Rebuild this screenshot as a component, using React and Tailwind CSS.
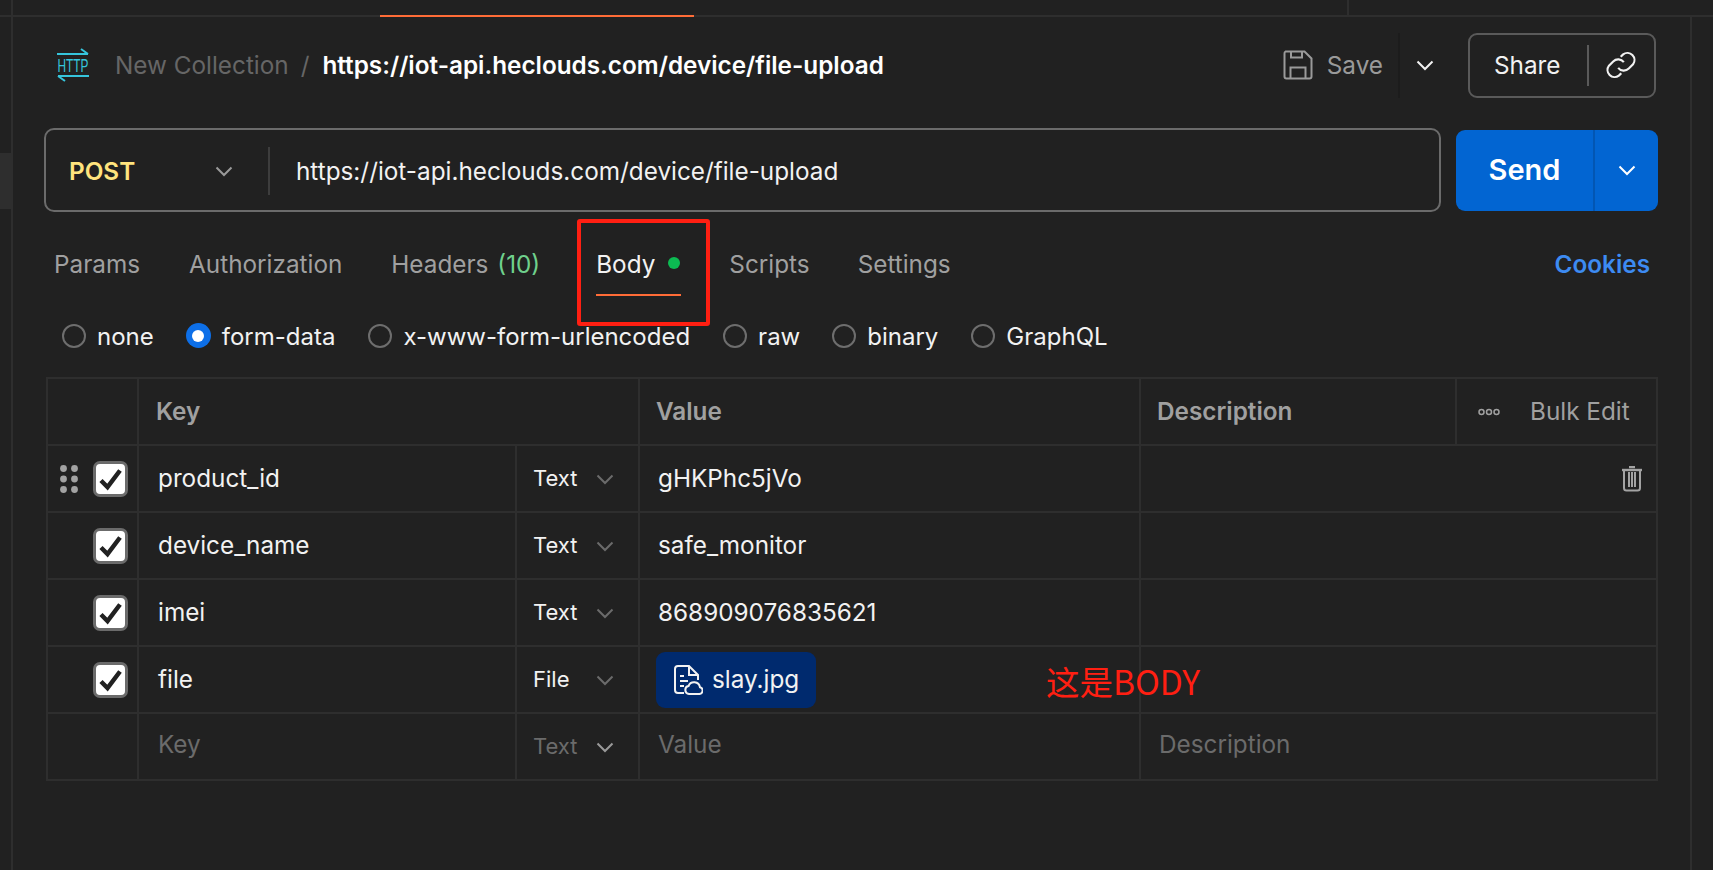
import React from "react";

const Chevron = ({ className = "", size = 20, color = "currentColor", sw = 2 }) => (
  <svg width={size} height={size} viewBox="0 0 20 20" fill="none" stroke={color} strokeWidth={sw} className={className}>
    <path d="M2.5 6.5 10 14l7.500-7.500" />
  </svg>
);

const Radio = ({ label, on, ml }) => (
  <div className={`flex items-center gap-[11px] ${ml}`}>
    {on ? (
      <span className="-mt-[3px] w-[25px] h-[25px] rounded-full bg-[#0d6fe8] flex items-center justify-center">
        <span className="w-[12px] h-[12px] rounded-full bg-white" />
      </span>
    ) : (
      <span className="-mt-[3px] w-[24px] h-[24px] rounded-full border-2 border-[#6e6e6e]" />
    )}
    <span className="text-[#f2f2f2]">{label}</span>
  </div>
);

const Check = () => (
  <span className="w-[35px] h-[36px] rounded-[7px] bg-white border-[3px] border-[#6b6b6b] flex items-center justify-center">
    <svg width="24" height="24" viewBox="0 0 24 24" fill="none" stroke="#212121" strokeWidth="4.500">
      <path d="M2 13.500 8.500 20 21 3.500" />
    </svg>
  </span>
);

const Grip = () => (
  <svg width="18" height="28" viewBox="0 0 18 28" fill="#a3a3a3">
    {[3.5, 14, 24.5].map((y) => (
      <g key={y}>
        <circle cx="3.500" cy={y} r="3.400" />
        <circle cx="14.500" cy={y} r="3.400" />
      </g>
    ))}
  </svg>
);

const Row = ({ k, type, value, grip, check = true, placeholder, trash, last }) => (
  <div className={`grid grid-cols-[91px_378px_123px_501px_1fr] ${last ? "h-[65px]" : "h-[67px] border-b-2 border-[#2e2e2e]"}`}>
    <div className="border-r-2 border-[#2e2e2e] flex items-center justify-end pr-[9px] gap-[15px]">
      {grip && <Grip />}
      {check && <Check />}
    </div>
    <div className={`border-r-2 border-[#2e2e2e] flex items-center pl-[19px] ${placeholder ? "text-[#6b6b6b] pb-[4px]" : "text-[#f2f2f2]"}`}>
      {k}
    </div>
    <div className={`border-r-2 border-[#2e2e2e] flex items-center pl-[16px] text-[22px] ${placeholder ? "text-[#6b6b6b]" : "text-[#f2f2f2]"}`}>
      <span className="w-[62px]">{type}</span>
      <Chevron size={20} color={placeholder ? "#9a9a9a" : "#6b6b6b"} />
    </div>
    <div className={`border-r-2 border-[#2e2e2e] flex items-center pl-[18px] ${placeholder ? "text-[#6b6b6b] pb-[4px]" : "text-[#f2f2f2]"}`}>
      {value}
    </div>
    <div className={`flex items-center justify-between pl-[18px] pr-[13px] text-[#6b6b6b] ${placeholder ? "pb-[4px]" : ""}`}>
      <span>{placeholder ? "Description" : ""}</span>
      {trash && (
        <svg width="22" height="26" viewBox="0 0 22 26" fill="none" stroke="#a3a3a3" strokeWidth="2">
          <path d="M8 1h6" strokeWidth="2.500" />
          <path d="M1 4h20" strokeWidth="2.400" />
          <path d="M3 5v17a2.500 2.500 0 0 0 2.500 2.500h11A2.500 2.500 0 0 0 19 22V5M8 6v15M11 6v15M14 6v15" />
        </svg>
      )}
    </div>
  </div>
);

export default function App() {
  return (
    <div className="w-[1713px] h-[870px] overflow-hidden bg-[#212121] flex flex-col text-[24.3px] font-['Inter',sans-serif]">
      <div className="h-[17px] shrink-0 border-b-2 border-[#2e2e2e] flex relative">
        <div className="w-[13px] border-r-2 border-[#2e2e2e]" />
        <div className="ml-[367px] w-[314px] h-[17px] border-b-2 border-[#ff6c37]" />
        <div className="ml-[653px] w-[2px] h-[15px] bg-[#2e2e2e]" />
      </div>
      <div className="flex-1 flex">
        <div className="w-[13px] border-r-2 border-[#2e2e2e] shrink-0">
          <div className="mt-[136px] h-[56px] w-[11px] bg-[#2e2e2e]" />
        </div>
        <div className="flex-1 relative pl-[31px] pr-[19px]">
          {/* header */}
          <div className="h-[95px] pt-[1px] flex items-center">
            <svg width="34" height="34" viewBox="0 0 34 34" fill="none" stroke="#36c5dc" strokeWidth="2" className="ml-[12px]">
              <path d="M1 6h31M25 1l7 5" />
              <text transform="translate(1.500 24) scale(0.66 1)" fill="#36c5dc" stroke="none" fontSize="18" fontFamily="Liberation Sans">HTTP</text>
              <path d="M2 28h31M2 28l7 5" />
            </svg>
            <span className="ml-[25px] text-[#666666]">New Collection</span>
            <span className="ml-[12px] text-[#666666]">/</span>
            <span className="ml-[13px] text-white font-semibold">https://iot-api.heclouds.com/device/file-upload</span>
            <div className="ml-auto mr-[15px] flex items-center">
              <svg width="30" height="30" viewBox="0 0 30 30" fill="none" stroke="#9a9a9a" strokeWidth="2">
                <path d="M2.500 1.500h19L28.500 8.500v18a2 2 0 0 1-2 2h-23a2 2 0 0 1-2-2v-23a2 2 0 0 1 1-2z" />
                <path d="M8 1.500v6h11v-6M7.500 28.500v-11h15v11" />
              </svg>
              <span className="ml-[14px] text-[#9a9a9a]">Save</span>
              <span className="ml-[15px] w-[2px] h-[65px] bg-[#1c1c1c]" />
              <Chevron size={20} color="#f2f2f2" className="ml-[15px]" />
              <div className="ml-[33px] w-[188px] h-[65px] rounded-[9px] border-2 border-[#5a5a5a] flex items-center">
                <span className="ml-[24px] text-[#f2f2f2]">Share</span>
                <span className="ml-[26px] w-[2px] h-[41px] bg-[#5a5a5a]" />
                <svg width="34" height="34" viewBox="0 0 24 24" fill="none" stroke="#f2f2f2" strokeWidth="1.500" className="ml-[15px]">
                  <path d="M10 14a5 5 0 0 0 7.500.5l3-3a5 5 0 0 0-7-7l-1.700 1.700" />
                  <path d="M14 10a5 5 0 0 0-7.500-.5l-3 3a5 5 0 0 0 7 7l1.700-1.700" />
                </svg>
              </div>
            </div>
          </div>
          {/* url */}
          <div className="mt-[16px] flex items-center gap-[15px]">
            <div className="w-[1397px] h-[84px] pt-[2px] rounded-[10px] border-2 border-[#6b6b6b] flex items-center">
              <span className="ml-[23px] w-[145px] text-[#ffe47e] font-semibold">POST</span>
              <Chevron size={20} color="#9a9a9a" />
              <span className="ml-[34px] w-[2px] h-[48px] bg-[#3d3d3d]" />
              <span className="ml-[26px] text-[#f2f2f2]">https://iot-api.heclouds.com/device/file-upload</span>
            </div>
            <div className="w-[202px] h-[81px] rounded-[9px] bg-[#0265d2] flex items-center text-white">
              <span className="w-[137px] text-center text-[29px] font-semibold">Send</span>
              <span className="w-[2px] h-[81px] bg-[#0256b3]" />
              <span className="flex-1 flex justify-center"><Chevron size={20} color="#ffffff" /></span>
            </div>
          </div>
          {/* tabs */}
          <div className="mt-[14px] h-[76px] flex items-center pl-[10px] text-[#a0a0a0] relative">
            <span>Params</span>
            <span className="ml-[49px]">Authorization</span>
            <span className="ml-[49px]">Headers <span className="ml-[2px] text-[#6fd08c]">(10)</span></span>
            <span className="ml-[56px] text-[#f2f2f2] flex items-center relative h-[62px]">
              Body
              <span className="ml-[13px] mb-[2px] w-[12px] h-[12px] rounded-full bg-[#0cbb52]" />
              <span className="absolute left-0 right-[-1px] bottom-[-1px] h-[2px] bg-[#ff6c37]" />
            </span>
            <span className="ml-[49px]">Scripts</span>
            <span className="ml-[48px]">Settings</span>
            <span className="ml-auto mr-[21px] text-[#3d8bf2] font-semibold">Cookies</span>
          </div>
          {/* radios */}
          <div className="mt-[10px] h-[50px] flex items-center pl-[18px] text-[24px]">
            <Radio label="none" ml="" />
            <Radio on label="form-data" ml="ml-[32px]" />
            <Radio label="x-www-form-urlencoded" ml="ml-[33px]" />
            <Radio label="raw" ml="ml-[33px]" />
            <Radio label="binary" ml="ml-[32px]" />
            <Radio label="GraphQL" ml="ml-[33px]" />
          </div>
          {/* table */}
          <div className="mt-[15px] ml-[2px] w-[1612px] border-2 border-[#2e2e2e]">
            <div className="grid grid-cols-[91px_501px_501px_316px_1fr] h-[67px] border-b-2 border-[#2e2e2e] font-semibold text-[#a0a0a0]">
              <div className="border-r-2 border-[#2e2e2e]" />
              <div className="border-r-2 border-[#2e2e2e] flex items-center pl-[17px]">Key</div>
              <div className="border-r-2 border-[#2e2e2e] flex items-center pl-[16px]">Value</div>
              <div className="border-r-2 border-[#2e2e2e] flex items-center pl-[16px]">Description</div>
              <div className="flex items-center pl-[21px] font-normal">
                <svg width="22" height="8" viewBox="0 0 22 8" fill="none" stroke="#a0a0a0" strokeWidth="1.500">
                  <circle cx="3.500" cy="4" r="2.500" />
                  <circle cx="11" cy="4" r="2.500" />
                  <circle cx="18.500" cy="4" r="2.500" />
                </svg>
                <span className="ml-[30px]">Bulk Edit</span>
              </div>
            </div>
            <Row grip trash k="product_id" type="Text" value="gHKPhc5jVo" />
            <Row k="device_name" type="Text" value="safe_monitor" />
            <Row k="imei" type="Text" value="868909076835621" />
            <Row
              k="file"
              type="File"
              value={
                <span className="ml-[-2px] w-[160px] h-[56px] rounded-[9px] bg-[#002a6e] flex items-center pl-[17px] text-[#f2f2f2]">
                  <svg width="30" height="30" viewBox="0 0 30 30" fill="none" stroke="#f2f2f2" strokeWidth="2">
                    <path d="M11 28H5a3 3 0 0 1-3-3V4a3 3 0 0 1 3-3h11l9 9v5" />
                    <path d="M16 1v9h9M7 11h4M7 16h8M7 21h4" />
                    <path d="M16 29a4 4 0 0 1-.500-7.900 6 6 0 0 1 11.500 1.200A3.400 3.400 0 0 1 26 29z" />
                  </svg>
                  <span className="ml-[9px]">slay.jpg</span>
                </span>
              }
            />
            <Row last placeholder check={false} k="Key" type="Text" value="Value" />
          </div>
          {/* annotations */}
          <div className="absolute left-[564px] top-[202px] w-[133px] h-[107px] rounded-[3px] border-[4px] border-[#ff1f12]" />
          <span className="absolute left-[1033px] top-[642px] text-[33.5px] text-[#ff1f12] font-['Noto_Sans_CJK_SC',sans-serif] leading-[44px]">这是BODY</span>
        </div>
        <div className="w-[23px] border-l-2 border-[#2e2e2e] shrink-0" />
      </div>
    </div>
  );
}
